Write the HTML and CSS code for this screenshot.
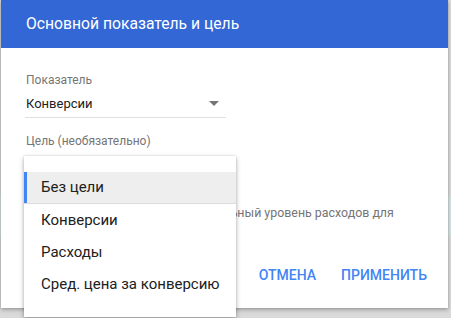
FILE: index.html
```html
<!DOCTYPE html>
<html lang="ru">
<head>
<meta charset="utf-8">
<link rel="stylesheet" href="styles.css">
</head>
<body>
<div class="dialog">
  <div class="dialog-header">Основной показатель и цель</div>
  <div class="dialog-body">
    <div class="field">
      <div class="field-label">Показатель</div>
      <div class="select">
        <span class="select-value">Конверсии</span>
        <svg class="arrow" width="10" height="5" viewBox="0 0 10 5"><path d="M0 0h10L5 5z" fill="#757575"/></svg>
      </div>
    </div>
    <div class="field field-goal">
      <div class="field-label">Цель (необязательно)</div>
      <div class="select select-empty"></div>
    </div>
    <p class="hint">Выберите цель, чтобы знать реальный уровень расходов для кампании.</p>
    <div class="actions">
      <button class="btn">Отмена</button>
      <button class="btn">Применить</button>
    </div>
  </div>
</div>
<ul class="menu">
  <li class="menu-item selected">Без цели</li>
  <li class="menu-item">Конверсии</li>
  <li class="menu-item">Расходы</li>
  <li class="menu-item">Сред. цена за конверсию</li>
</ul>
</body>
</html>
```
FILE: styles.css
```css
html, body {
  margin: 0;
  padding: 0;
}
body {
  width: 451px;
  height: 318px;
  overflow: hidden;
  position: relative;
  font-family: Roboto, "Noto Sans", sans-serif;
  background:
    linear-gradient(#d6e3e3, #d6e3e3) 0 195px / 100% 42px no-repeat,
    #dadada;
}
.dialog {
  margin-left: 1px;
  width: 447px;
  height: 308px;
  background: #fff;
  box-shadow: 0 2px 4px rgba(0,0,0,0.25), 0 0 2px rgba(0,0,0,0.15);
  display: flex;
  flex-direction: column;
}
.dialog-header {
  height: 48px;
  background: #3367d6;
  color: #fff;
  font-size: 15.7px;
  line-height: 48px;
  padding-left: 25px;
}
.dialog-body {
  padding: 0 12px 0 24px;
  flex: 1;
  display: flex;
  flex-direction: column;
}
.field {
  width: 201px;
  margin-top: 24px;
}
.field-label {
  font-size: 12px;
  line-height: 16px;
  color: #757575;
  padding-left: 1px;
}
.select {
  display: flex;
  align-items: center;
  justify-content: space-between;
  height: 20px;
  padding: 0 7px 4px 1px;
  margin-top: 5px;
  border-bottom: 1px solid #e0e0e0;
}
.select-value {
  font-size: 13px;
  color: #212121;
}
.field-goal {
  margin-top: 15px;
}
.select-empty {
  border-bottom: none;
}
.hint {
  margin: 26px 0 0;
  padding-left: 10px;
  font-size: 12.4px;
  line-height: 18px;
  color: #757575;
  width: 371px;
}
.actions {
  margin-top: auto;
  margin-bottom: 19px;
  display: flex;
  justify-content: flex-end;
  gap: 7px;
}
.btn {
  border: none;
  background: none;
  font-family: Roboto, sans-serif;
  font-weight: 500;
  font-size: 14px;
  color: #4285f4;
  text-transform: uppercase;
  padding: 6px 9px;
  line-height: 16px;
}
.menu {
  position: absolute;
  left: 24px;
  top: 156px;
  width: 212px;
  margin: 0;
  padding: 16px 0 17px;
  list-style: none;
  background: #fff;
  box-shadow: 0 2px 5px rgba(0,0,0,0.3), 0 0 2px rgba(0,0,0,0.12);
}
.menu-item {
  height: 32px;
  line-height: 32px;
  padding-left: 17px;
  font-size: 15px;
  color: #212121;
  white-space: nowrap;
}
.menu-item.selected {
  background: #eeeeee;
  box-shadow: inset 3px 0 0 #4285f4;
  border-bottom: 1px solid #dcdcdc;
  height: 31px;
  line-height: 31px;
}
```
